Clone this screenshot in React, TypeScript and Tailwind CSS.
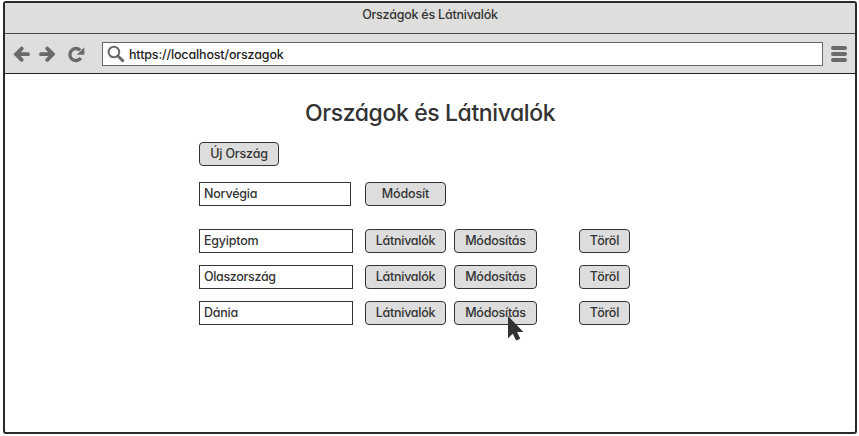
import type { ReactNode } from "react";

const countries = [
  { name: "Egyiptom", tracking: "tracking-[-0.22px]" },
  { name: "Olaszország", tracking: "tracking-[-0.33px]" },
  { name: "Dánia", tracking: "tracking-[-0.25px]" },
];

function Button({ className, tracking, children }: { className: string; tracking: string; children: ReactNode }) {
  return (
    <button className={`h-6 shrink-0 rounded-[4px] border border-[#333] bg-[#ddd] text-center font-medium whitespace-nowrap leading-[22px] ${className}`}>
      <span className={tracking}>{children}</span>
    </button>
  );
}

function Field({ className, tracking, children }: { className: string; tracking: string; children: ReactNode }) {
  return (
    <div className={`h-6 shrink-0 border border-[#333] bg-white pl-1 leading-[22px] whitespace-nowrap ${className}`}>
      <span className={tracking}>{children}</span>
    </div>
  );
}

export default function App() {
  return (
    <div className="h-[436px] w-[859px] overflow-hidden bg-white pt-px pl-[3px] font-['Inter',sans-serif] text-[12.5px] font-medium text-[#333] [font-feature-settings:'cv11']">
      <div className="flex h-[433px] w-[854px] flex-col overflow-hidden rounded-[3px] border-2 border-[#2a2a2c] bg-white">
        <div className="h-[31px] shrink-0 border-b border-[#4a4a4c] bg-[#dededd] text-center leading-6">
          <span className="tracking-[-0.23px]">Országok és Látnivalók</span>
        </div>
        <div className="flex h-10 shrink-0 items-center border-b border-[#222] bg-[#dededd] text-[#6a6a6a]">
          <svg className="ml-2 h-6 w-[17px]" viewBox="0 0 17 24" fill="none" stroke="currentColor" strokeWidth="3.8">
            <path d="M8.7 6.6 3.1 12.2l5.6 5.6M3.5 12.2H15" strokeLinecap="round" />
          </svg>
          <svg className="ml-2 h-6 w-[17px]" viewBox="0 0 17 24" fill="none" stroke="currentColor" strokeWidth="3.8">
            <path d="m9.3 6.6 5.6 5.6-5.6 5.6M14.5 12.2H3" strokeLinecap="round" />
          </svg>
          <svg className="ml-3 h-6 w-[18px]" viewBox="0 0 18 24">
            <path d="M13.2 8.4A6 6 0 1 0 13.8 16" fill="none" stroke="currentColor" strokeWidth="3.4" />
            <path d="M17.4 5.2v7.6H9.8z" fill="currentColor" />
          </svg>
          <div className="ml-[17px] flex h-6 w-[721px] items-center border border-[#666] bg-white text-[#222]">
            <svg className="ml-1 h-[18px] w-[18px] shrink-0 text-[#6a6a6a]" viewBox="0 0 18 18" fill="none" stroke="currentColor">
              <circle cx="6.9" cy="7" r="5.3" strokeWidth="2" />
              <path d="m11 11 4.7 4.6" strokeWidth="3" strokeLinecap="round" />
            </svg>
            <span className="ml-1 pt-[3px] tracking-[-0.15px] whitespace-nowrap">https://localhost/orszagok</span>
          </div>
          <svg className="ml-2 h-6 w-4" viewBox="0 0 16 24" fill="currentColor">
            <rect x="0" y="4" width="16" height="4" rx="2" />
            <rect x="0" y="10" width="16" height="4" rx="2" />
            <rect x="0" y="16" width="16" height="4" rx="2" />
          </svg>
        </div>
        <main className="flex w-[850px] flex-col pl-[194px]">
          <h1 className="mt-[23px] ml-[106px] h-8 text-[23px] leading-8 font-medium tracking-[-0.4px] whitespace-nowrap">Országok és Látnivalók</h1>
          <Button className="mt-[13px] w-20" tracking="tracking-[-0.18px]">Új Ország</Button>
          <div className="mt-4 flex">
            <Field className="w-[152px]" tracking="tracking-[-0.2px]">Norvégia</Field>
            <Button className="ml-[14px] w-[81px]" tracking="tracking-[-0.15px]">Módosít</Button>
          </div>
          <div className="mt-[23px] flex flex-col gap-3">
            {countries.map(({ name, tracking }, i) => (
              <div key={name} className="flex">
                <Field className="w-[154px]" tracking={tracking}>{name}</Field>
                <Button className="ml-3 w-[81px]" tracking="tracking-[-0.25px]">Látnivalók</Button>
                <div className="relative ml-2">
                  <Button className="w-[83px]" tracking="tracking-[-0.22px]">Módosítás</Button>
                  {i === 2 && (
                    <svg className="absolute top-[15px] left-[54px] h-[25px] w-[17px]" viewBox="0 0 17 25">
                      <path d="M0 0v22.3l4.8-4.5 3.3 6.7 4.2-1.8-3.2-6.7h6.3z" fill="#303233" />
                    </svg>
                  )}
                </div>
                <Button className="ml-[42px] w-[51px]" tracking="tracking-[-0.22px]">Töröl</Button>
              </div>
            ))}
          </div>
        </main>
      </div>
    </div>
  );
}
